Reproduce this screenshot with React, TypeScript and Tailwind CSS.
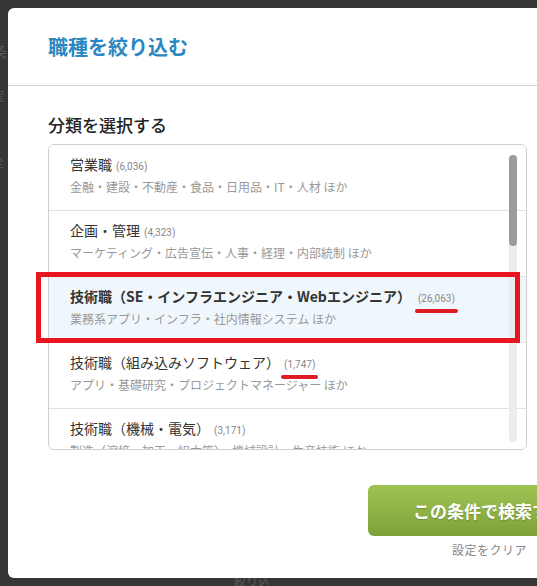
const categories = [
  {
    name: "営業職",
    count: "6,036",
    sub: "金融・建設・不動産・食品・日用品・IT・人材 ほか",
  },
  {
    name: "企画・管理",
    count: "4,323",
    sub: "マーケティング・広告宣伝・人事・経理・内部統制 ほか",
  },
  {
    name: "技術職（SE・インフラエンジニア・Webエンジニア）",
    count: "26,063",
    sub: "業務系アプリ・インフラ・社内情報システム ほか",
    active: true,
    mark: true,
  },
  {
    name: "技術職（組み込みソフトウェア）",
    count: "1,747",
    sub: "アプリ・基礎研究・プロジェクトマネージャー ほか",
    mark: true,
  },
  {
    name: "技術職（機械・電気）",
    count: "3,171",
    sub: "製造（溶接・加工・組立等）・機械設計・生産技術 ほか",
  },
];

const jp = "font-['Noto_Sans_CJK_JP','Noto_Sans',sans-serif]";

export default function App() {
  return (
    <div className={`relative h-[586px] w-[537px] overflow-hidden bg-[#363636] ${jp}`}>
      {/* page behind the dialog */}
      <div className="-ml-2 flex flex-col gap-6 pt-10 text-[15px] text-[#5a5a5a]">
        <span>条</span>
        <span className="text-[12px]">実</span>
        <span className="mt-6 text-[12px]">全</span>
      </div>
      <div className="absolute bottom-[-4px] left-[234px] text-[12px] text-[#5a5a5a]">絞り込</div>

      {/* dialog */}
      <div className="absolute left-2 top-2 bottom-2 w-[620px] rounded-l-md bg-white">
        <div className="flex h-[78px] items-center border-b border-[#d4d4d4] pl-10">
          <h1 className="text-[20px] font-bold leading-none text-[#2b87bf]">職種を絞り込む</h1>
        </div>

        <div className="pl-10">
          <h2 className="mt-[30px] text-[17px] font-medium leading-none text-[#222]">分類を選択する</h2>

          <div className="relative mt-[11px] h-[306px] w-[479px] overflow-hidden rounded-md border border-[#cfcfcf]">
            {categories.map((c) => (
              <div
                key={c.name}
                className={`flex h-[66px] flex-col gap-[2px] border-b border-[#e2e2e2] pl-[21px] pt-[10px] ${
                  c.active ? "bg-[#f0f7fc]" : "bg-white"
                }`}
              >
                <div className="flex items-baseline leading-[18px]">
                  <span className={`text-[14px] text-[#333] ${c.active ? "font-bold" : ""}`}>{c.name}</span>
                  <span
                    className={`relative font-['Roboto',sans-serif] text-[10px] text-[#888] ${
                      c.active ? "ml-[7px]" : "ml-1"
                    }`}
                  >
                    ({c.count})
                    {c.mark && (
                      <span className="absolute -left-[3px] -right-[3px] top-[19px] h-[4px] rounded-full bg-[#e01b24]" />
                    )}
                  </span>
                </div>
                <div className="text-[12px] leading-[18px] text-[#999]">{c.sub}</div>
              </div>
            ))}
            <div className="absolute right-[9px] top-[10px] bottom-[7px] w-2 rounded-full bg-[#ececec]">
              <div className="h-[91px] w-2 rounded-full bg-[#9c9c9c]" />
            </div>
          </div>
        </div>

        <div className="ml-[360px] mt-[35px] flex w-[243px] flex-col items-center">
          <button className="flex h-[51px] w-full items-center justify-center rounded-md bg-gradient-to-b from-[#9fc352] to-[#7ea239] text-[17px] font-bold text-white [text-shadow:0_1px_1px_rgba(0,0,0,0.2)]">
            この条件で検索する
          </button>
          <span className="mt-[5px] text-[12px] tracking-[0.5px] text-[#888]">設定をクリア</span>
        </div>
      </div>

      {/* annotation */}
      <div className="absolute left-[36px] top-[272px] h-[71px] w-[484px] border-[5px] border-[#e8141f]" />
    </div>
  );
}
